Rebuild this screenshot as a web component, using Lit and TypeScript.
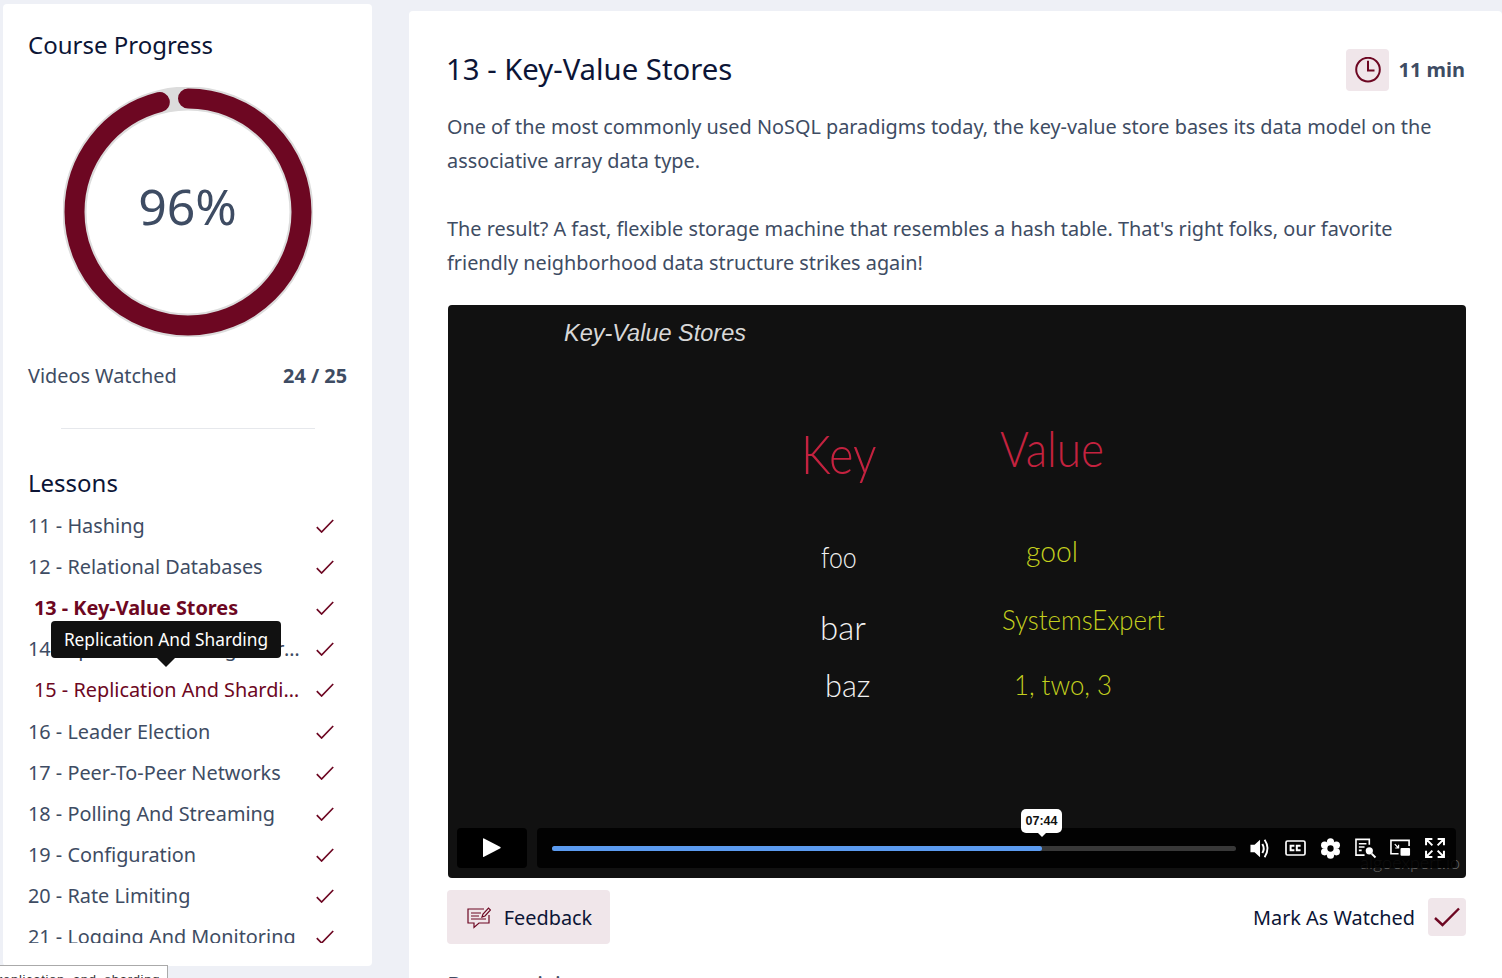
import { LitElement, html, css, svg } from 'lit';
import { customElement } from 'lit/decorators.js';

const LESSONS = [
  { label: '11 - Hashing' },
  { label: '12 - Relational Databases' },
  { label: '13 - Key-Value Stores', mode: 'current' },
  { label: '14 - Specialized Storage Paradigms' },
  { label: '15 - Replication And Sharding', mode: 'hover' },
  { label: '16 - Leader Election' },
  { label: '17 - Peer-To-Peer Networks' },
  { label: '18 - Polling And Streaming' },
  { label: '19 - Configuration' },
  { label: '20 - Rate Limiting' },
  { label: '21 - Logging And Monitoring' },
];

// board contents of the video frame: x, y (top left), font size, x squeeze, colour class
const BOARD = [
  { t: 'Key', x: 353, y: 122, s: 54, k: 0.87, c: 'red' },
  { t: 'Value', x: 552, y: 118, s: 50, k: 0.88, c: 'red' },
  { t: 'foo', x: 373, y: 236, s: 30, k: 0.83, c: 'white' },
  { t: 'bar', x: 372, y: 306, s: 33, k: 1, c: 'white' },
  { t: 'baz', x: 377, y: 364, s: 32, k: 0.96, c: 'white' },
  { t: 'gool', x: 578, y: 230, s: 30, k: 0.94, c: 'lime' },
  { t: 'SystemsExpert', x: 554, y: 300, s: 28, k: 0.92, c: 'lime' },
  { t: '1, two, 3', x: 566, y: 365, s: 28, k: 0.92, c: 'lime' },
];

const check = html`<svg class="check" viewBox="0 0 18 14" width="18" height="14">
  <path d="M0.8 8.2 L5.6 13 L17.2 1" fill="none" stroke="#6d0722" stroke-width="1.7" />
</svg>`;

const ICONS = {
  play: svg`<path d="M0 0.8 Q0 0 1 0.4 L17.4 9 Q18 9.6 17.4 10.2 L1 18.8 Q0 19.2 0 18.4 Z" fill="#fff" />`,
  volume: svg`<path d="M0.5 7 H5 L11 1.5 V20.5 L5 15 H0.5 Z" fill="#fff" />
    <path d="M13.5 6 Q16.5 11 13.5 16" fill="none" stroke="#fff" stroke-width="2.2" />
    <path d="M16 1.5 Q22.5 11 16 20.5" fill="none" stroke="#fff" stroke-width="2" />`,
  cc: svg`<rect x="1" y="1" width="19" height="14" rx="1.5" fill="none" stroke="#fff" stroke-width="1.7" />
    <path d="M9.4 5.8 H5.6 V10.2 H9.4 M15.6 5.8 H11.8 V10.2 H15.6" fill="none" stroke="#fff" stroke-width="2" />`,
  gear: svg`<g fill="#fff">
      <circle cx="10" cy="3.6" r="3.4" /><circle cx="10" cy="16.4" r="3.4" />
      <circle cx="4.4" cy="6.8" r="3.4" /><circle cx="15.6" cy="6.8" r="3.4" />
      <circle cx="4.4" cy="13.2" r="3.4" /><circle cx="15.6" cy="13.2" r="3.4" />
      <circle cx="10" cy="10" r="5" />
    </g><circle cx="10" cy="10" r="3" fill="#000" />`,
  transcript: svg`<path d="M15 7 V1.5 H1 V18 H10" fill="none" stroke="#fff" stroke-width="1.7" />
    <path d="M4 6 H12 M4 9.5 H10 M4 13 H7" stroke="#fff" stroke-width="1.7" />
    <circle cx="15" cy="13.5" r="3.8" fill="#fff" />
    <path d="M17.5 16.5 L21.5 20.5" stroke="#fff" stroke-width="2" />`,
  pip: svg`<path d="M9 15 H1 V1 H20 V7" fill="none" stroke="#fff" stroke-width="1.7" />
    <path d="M5 5 L9 9 M9 5.5 V9 H5.5" fill="none" stroke="#fff" stroke-width="1.3" />
    <rect x="11" y="9" width="10" height="8" rx="1" fill="#fff" />`,
  full: svg`<path d="M7 1 H1 V7 M1 1 L7 7 M12 1 H18 V7 M18 1 L12 7 M1 12 V18 H7 M1 18 L7 12 M18 12 V18 H12 M18 18 L12 12"
      fill="none" stroke="#fff" stroke-width="1.9" />`,
};

@customElement('app-root')
export class AppRoot extends LitElement {
  static styles = css`
    :host {
      display: flex;
      align-items: flex-start;
      gap: 37px;
      box-sizing: border-box;
      width: 1502px;
      height: 978px;
      padding: 4px 0 0 3px;
      overflow: hidden;
      position: relative;
      background: #eef0f6;
      color: #3e4c63;
      font-family: 'Noto Sans', sans-serif;
      font-size: 19.85px;
    }
    .side {
      flex: none;
      box-sizing: border-box;
      width: 369px;
      height: 962px;
      padding: 25px 25px 23px;
      display: flex;
      flex-direction: column;
      background: #fff;
      border-radius: 4px;
    }
    h2 {
      margin: 0;
      font-size: 24px;
      line-height: 32px;
      font-weight: 400;
      color: #0c1536;
    }
    .ring {
      position: relative;
      align-self: center;
      width: 250px;
      height: 250px;
      margin-top: 26px;
    }
    .ring span {
      position: absolute;
      inset: 0 0 12px 0;
      display: flex;
      align-items: center;
      justify-content: center;
      font-size: 50px;
    }
    .watched {
      display: flex;
      justify-content: space-between;
      margin-top: 24px;
      line-height: 30px;
    }
    b { font-weight: 700; }
    .rule {
      align-self: center;
      width: 254px;
      height: 1px;
      margin-top: 37px;
      background: #e6e8ec;
    }
    .lessons-title { margin-top: 38px; }
    .list {
      flex: 1;
      min-height: 0;
      margin-top: 6px;
      overflow: hidden;
    }
    .row {
      display: flex;
      align-items: center;
      height: 41.2px;
    }
    .name {
      box-sizing: border-box;
      width: 272px;
      overflow: hidden;
      white-space: nowrap;
      text-overflow: ellipsis;
      line-height: 30px;
    }
    .row.current .name { padding-left: 6px; color: #6d0722; font-weight: 700; }
    .row.hover .name { padding-left: 6px; color: #6d0722; }
    .check { flex: none; margin-left: 16px; }
    .tip {
      position: absolute;
      left: 51px;
      top: 621px;
      width: 230px;
      height: 37px;
      display: flex;
      align-items: center;
      justify-content: center;
      padding-bottom: 1px;
      box-sizing: border-box;
      background: #111;
      border-radius: 4px;
      color: #fff;
      font-size: 17.3px;
    }
    .tip::after {
      content: '';
      position: absolute;
      left: 106px;
      top: 37px;
      border: 9px solid transparent;
      border-top-color: #111;
      border-bottom: 0;
    }
    .main {
      flex: 1;
      min-width: 0;
      box-sizing: border-box;
      height: 1100px;
      margin-top: 7px;
      padding: 38px 36px 0 38px;
      background: #fff;
      border-radius: 4px;
    }
    .head {
      display: flex;
      align-items: center;
      height: 42px;
    }
    h1 {
      flex: 1;
      margin: -2px 0 0 -1px;
      font-size: 29.3px;
      font-weight: 400;
      color: #0c1536;
    }
    .tint {
      display: flex;
      align-items: center;
      justify-content: center;
      background: #f0e6ea;
      border-radius: 4px;
    }
    .clock { width: 43px; height: 42px; margin-right: 9px; margin-left: 1px; }
    .mins { font-weight: 700; font-size: 20px; margin-top: -2px; margin-right: 1px; }
    .desc { margin: 19px 0 25px; line-height: 34px; }
    .desc p { margin: 0 0 34px; }
    .desc p:last-child { margin: 0; }
    .video {
      position: relative;
      height: 573px;
      margin-left: 1px;
      background: #111;
      border-radius: 4px;
      overflow: hidden;
    }
    .vtitle {
      position: absolute;
      left: 116px;
      top: 15px;
      font-family: 'Liberation Sans', sans-serif;
      font-style: italic;
      font-size: 23.5px;
      color: #d8d8d8;
    }
    .chalk {
      position: absolute;
      line-height: 1;
      white-space: nowrap;
      transform-origin: left top;
      font-family: 'Lato', sans-serif;
      font-weight: 300;
    }
    .chalk.red { color: #c4223f; }
    .chalk.white { color: #f2f2f2; }
    .chalk.lime { color: #c4d01e; }
    .mark {
      position: absolute;
      right: 6px;
      bottom: 6px;
      font-family: 'Lato', sans-serif;
      font-weight: 300;
      font-size: 18px;
      line-height: 20px;
      color: #666;
    }
    .controls {
      position: absolute;
      left: 9px;
      right: 10px;
      bottom: 10px;
      height: 40px;
      display: flex;
      gap: 10px;
    }
    .playbtn {
      flex: none;
      width: 70px;
      display: flex;
      align-items: center;
      justify-content: center;
      background: #000;
      border-radius: 4px;
    }
    .bar {
      flex: 1;
      min-width: 0;
      display: flex;
      align-items: center;
      padding-left: 15px;
      background: rgba(0, 0, 0, 0.88);
      border-radius: 4px;
    }
    .track {
      flex: none;
      position: relative;
      width: 684px;
      height: 5px;
      margin-right: 14px;
      background: #383838;
      border-radius: 3px;
    }
    .fill {
      height: 100%;
      background: #5b9bf0;
      border-radius: 3px;
    }
    .time {
      position: absolute;
      top: -37px;
      display: flex;
      align-items: center;
      justify-content: center;
      width: 41px;
      height: 24px;
      margin-left: -21px;
      background: #fff;
      border-radius: 5px;
      color: #111;
      font-family: 'Liberation Sans', sans-serif;
      font-size: 12.5px;
      font-weight: 700;
    }
    .time::after {
      content: '';
      position: absolute;
      left: 16.5px;
      top: 24px;
      border: 4px solid transparent;
      border-top-color: #fff;
      border-bottom: 0;
    }
    .tools { display: flex; align-items: center; gap: 14px; }
    .tools svg { flex: none; overflow: visible; }
    .actions {
      display: flex;
      align-items: center;
      justify-content: space-between;
      margin-top: 12px;
      color: #0c1536;
    }
    .feedback {
      width: 163px;
      height: 54px;
      gap: 13px;
      padding-left: 2px;
      box-sizing: border-box;
    }
    .markrow { display: flex; align-items: center; gap: 13px; }
    .box { width: 38px; height: 38px; }
    h3 {
      margin: 25px 0 0;
      font-size: 24px;
      font-weight: 400;
      line-height: 32px;
    }
    .status {
      position: absolute;
      left: 0;
      bottom: 0;
      box-sizing: border-box;
      width: 168px;
      height: 13px;
      padding-top: 6px;
      background: #fff;
      border: 1px solid #aaa;
      border-width: 1px 1px 0 0;
      overflow: hidden;
      font-family: 'Liberation Sans', sans-serif;
      font-size: 13px;
      letter-spacing: 0.7px;
      line-height: 16px;
      white-space: nowrap;
      color: #333;
      text-indent: -2px;
    }
  `;

  render() {
    return html`
      <aside class="side">
        <h2>Course Progress</h2>
        <div class="ring">
          <svg viewBox="0 0 250 250" width="250" height="250">
            <circle cx="125" cy="125" r="113.5" fill="none" stroke="#dcdcdc" stroke-width="24" />
            <circle cx="125" cy="125" r="113.5" fill="none" stroke="#6d0722" stroke-width="20"
              stroke-linecap="round" pathLength="100" stroke-dasharray="96 100"
              transform="rotate(-90 125 125)" />
          </svg>
          <span>96%</span>
        </div>
        <div class="watched"><span>Videos Watched</span><b>24 / 25</b></div>
        <div class="rule"></div>
        <h2 class="lessons-title">Lessons</h2>
        <div class="list">
          ${LESSONS.map(
            (l) => html`<div class="row ${l.mode ?? ''}"><span class="name">${l.label}</span>${check}</div>`
          )}
        </div>
      </aside>
      <div class="tip">Replication And Sharding</div>

      <main class="main">
        <div class="head">
          <h1>13 - Key-Value Stores</h1>
          <div class="tint clock">
            <svg viewBox="0 0 26 26" width="26" height="26" fill="none" stroke="#6d0722" stroke-width="2">
              <circle cx="13" cy="12.6" r="11.8" />
              <path d="M13 3.8 V13.6 H19.5" />
            </svg>
          </div>
          <span class="mins">11 min</span>
        </div>
        <div class="desc">
          <p>One of the most commonly used NoSQL paradigms today, the key-value store bases its data model on the associative array data type.</p>
          <p>The result? A fast, flexible storage machine that resembles a hash table. That's right folks, our favorite friendly neighborhood data structure strikes again!</p>
        </div>
        <div class="video">
          <div class="vtitle">Key-Value Stores</div>
          ${BOARD.map(
            (b) => html`<span class="chalk ${b.c}"
              style="left:${b.x}px;top:${b.y}px;font-size:${b.s}px;transform:scaleX(${b.k})">${b.t}</span>`
          )}
          <div class="mark">algoexpert.io</div>
          <div class="controls">
            <div class="playbtn"><svg viewBox="0 0 18 20" width="18" height="20">${ICONS.play}</svg></div>
            <div class="bar">
              <div class="track">
                <div class="fill" style="width:${(490 / 684) * 100}%"></div>
                <div class="time" style="left:490px">07:44</div>
              </div>
              <div class="tools">
                <svg viewBox="0 0 23 22" width="21" height="21">${ICONS.volume}</svg>
                <svg viewBox="0 0 21 16" width="21" height="16">${ICONS.cc}</svg>
                <svg viewBox="0 0 20 20" width="21" height="21">${ICONS.gear}</svg>
                <svg viewBox="0 0 22 21" width="21" height="20">${ICONS.transcript}</svg>
                <svg viewBox="0 0 22 18" width="21" height="18">${ICONS.pip}</svg>
                <svg viewBox="0 0 19 19" width="20" height="20">${ICONS.full}</svg>
              </div>
            </div>
          </div>
        </div>
        <div class="actions">
          <div class="tint feedback">
            <svg viewBox="0 0 24 23" width="24" height="23" fill="none" stroke="#6d0722" stroke-width="1.2">
              <path d="M17 3 H1 V17 H7 V21.5 L12 17 H22 V9" />
              <path d="M4 7 H14 M4 10 H12 M4 13 H19" />
              <path d="M15 11 L16 8 L21.5 2 L23.5 4 L18 10 Z" />
            </svg>
            <span>Feedback</span>
          </div>
          <div class="markrow">
            <span>Mark As Watched</span>
            <div class="tint box">
              <svg viewBox="0 0 26 20" width="26" height="20" fill="none" stroke="#6d0722" stroke-width="2.4">
                <path d="M1 11 L8.5 18 L25 1.5" />
              </svg>
            </div>
          </div>
        </div>
        <h3>Prerequisites</h3>
      </main>
      <div class="status">replication_and_sharding</div>
    `;
  }
}
